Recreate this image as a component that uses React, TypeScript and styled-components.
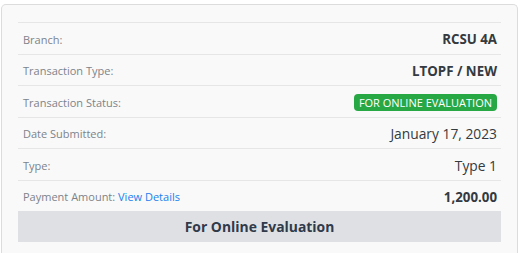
import styled, { createGlobalStyle } from 'styled-components'

const GlobalStyle = createGlobalStyle`
  html, body {
    margin: 0;
    padding: 0;
    background: #fff;
    font-family: 'Open Sans', 'Noto Sans', Arial, sans-serif;
  }
`

const Page = styled.div`
  padding: 4px 3px 0 1px;
  height: 253px;
  box-sizing: border-box;
  overflow: hidden;
`

const Card = styled.div`
  border: 1px solid #dcdcdc;
  border-bottom: none;
  border-radius: 5px 5px 0 0;
  background: #f9f9f9;
  padding: 17px 16px 20px 16px;
  min-height: 260px;
  box-sizing: border-box;
`

const Row = styled.div`
  display: flex;
  align-items: center;
  justify-content: space-between;
  height: 31.5px;
  border-top: 1px solid #e6e6e6;
  padding: 2px 4px 0 5px;
  box-sizing: border-box;
`

const Label = styled.span`
  font-size: 11px;
  color: #7d838a;
`

const Link = styled.a`
  color: #1a7ff0;
  text-decoration: none;
  cursor: pointer;
`

const Value = styled.span<{ $bold?: boolean }>`
  font-size: ${(p) => (p.$bold ? '13.3px' : '13.8px')};
  font-weight: ${(p) => (p.$bold ? 700 : 400)};
  color: #343a40;
`

const Badge = styled.span`
  display: inline-block;
  background: #28a745;
  color: #fff;
  font-size: 11px;
  line-height: 17px;
  padding: 0 5px;
  border-radius: 4px;
  text-transform: uppercase;
`

const StatusBar = styled.div`
  height: 31px;
  background: #dfe0e3;
  display: flex;
  align-items: center;
  justify-content: center;
  font-size: 13.9px;
  font-weight: 700;
  color: #2f3a4a;
`

export default function App() {
  return (
    <>
      <GlobalStyle />
      <Page>
        <Card>
          <Row>
            <Label>Branch:</Label>
            <Value $bold>RCSU 4A</Value>
          </Row>
          <Row>
            <Label>Transaction Type:</Label>
            <Value $bold>LTOPF / NEW</Value>
          </Row>
          <Row>
            <Label>Transaction Status:</Label>
            <Badge>For Online Evaluation</Badge>
          </Row>
          <Row>
            <Label>Date Submitted:</Label>
            <Value>January 17, 2023</Value>
          </Row>
          <Row>
            <Label>Type:</Label>
            <Value>Type 1</Value>
          </Row>
          <Row>
            <Label>
              Payment Amount: <Link>View Details</Link>
            </Label>
            <Value $bold>1,200.00</Value>
          </Row>
          <StatusBar>For Online Evaluation</StatusBar>
        </Card>
      </Page>
    </>
  )
}
